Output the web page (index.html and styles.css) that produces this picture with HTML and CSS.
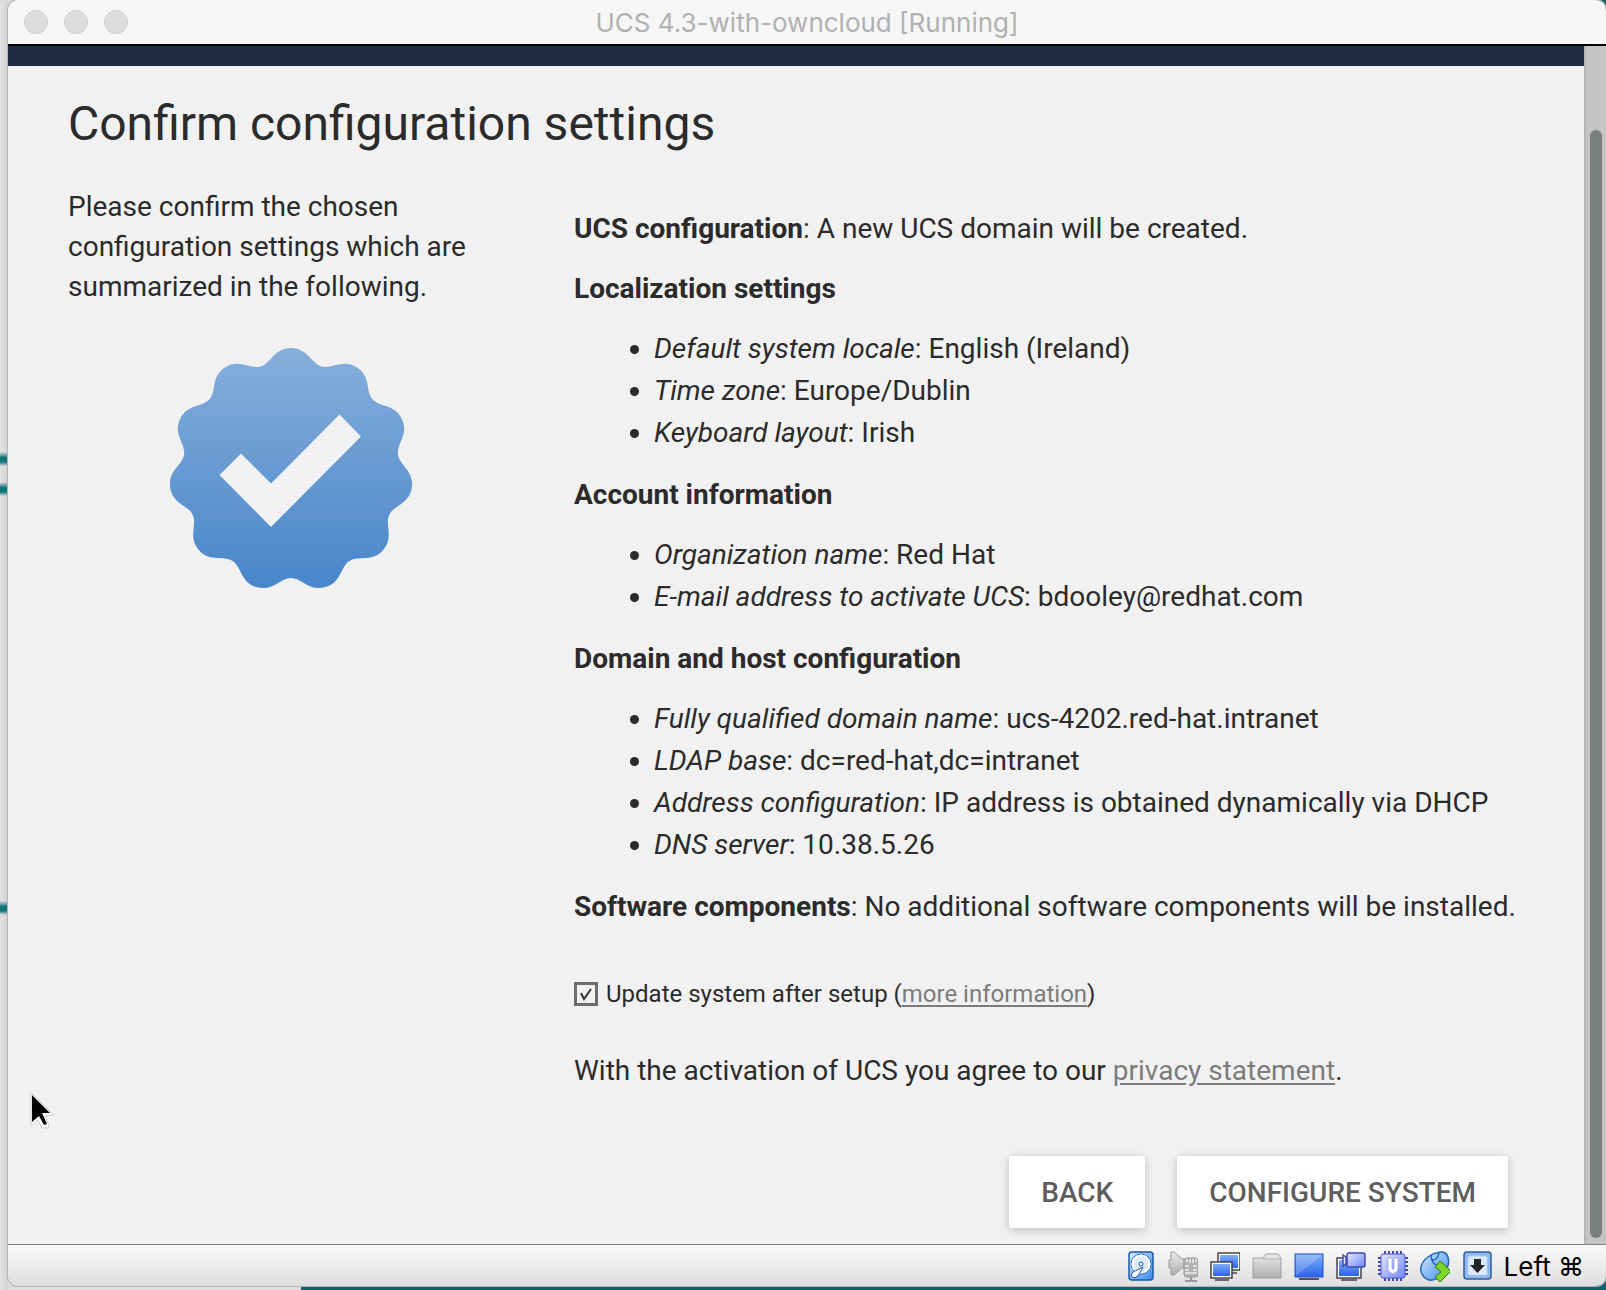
FILE: index.html
```html
<!DOCTYPE html>
<html lang="en">
<head>
<meta charset="utf-8">
<title>UCS 4.3-with-owncloud [Running]</title>
<link rel="stylesheet" href="styles.css">
</head>
<body>
<div class="window">
  <header class="titlebar">
    <div class="lights">
      <button class="light" type="button" aria-label="Close"></button>
      <button class="light" type="button" aria-label="Minimize"></button>
      <button class="light" type="button" aria-label="Zoom"></button>
    </div>
    <div class="window-title">UCS 4.3-with-owncloud [Running]</div>
  </header>

  <div class="screen">
    <main class="wizard">
      <div class="navbar"></div>
      <div class="page">
        <h1>Confirm configuration settings</h1>
        <div class="columns">
          <aside class="intro">
            <p>Please confirm the chosen configuration settings which are summarized in the following.</p>
            <svg class="badge" viewBox="-122 -122 244 242" aria-hidden="true">
              <defs>
                <linearGradient id="badge-fill" x1="0" y1="0" x2="0" y2="1">
                  <stop offset="0" stop-color="#86aeda"/>
                  <stop offset="1" stop-color="#4886ca"/>
                </linearGradient>
              </defs>
              <path fill="url(#badge-fill)" d="M0-122C17-122 20-106.600 30.400-103.600S51.700-111.800 66-102.600 74.400-79 81.600-70.700 103.900-66.200 111-50.700 105.300-26.300 106.900-15.400 123.200.6 120.800 17.400 102.800 34.900 98.200 44.900 103.300 67.100 92.200 79.900 67.700 85 58.400 90.900 50.700 112.300 34.400 117.100 11 108 0 108-18.100 121.900-34.400 117.100-49.100 96.800-58.400 90.900-81.100 92.700-92.200 79.900-93.600 54.900-98.200 44.900-118.400 34.200-120.800 17.400-108.500-4.500-106.900-15.400-118.100-35.200-111-50.700-88.800-62.400-81.600-70.700-80.300-93.400-66-102.600-41-100.500-30.400-103.600-17-122 0-122Z"/>
              <path fill="#f1f1f1" d="M-71.5 5-50-16.500-20 13.500 48.500-55.500 70-33.500-20 57Z"/>
            </svg>
          </aside>

          <section class="summary">
            <p><b>UCS configuration</b>: A new UCS domain will be created.</p>
            <p><b>Localization settings</b></p>
            <ul>
              <li><i>Default system locale</i>: English (Ireland)</li>
              <li><i>Time zone</i>: Europe/Dublin</li>
              <li><i>Keyboard layout</i>: Irish</li>
            </ul>
            <p><b>Account information</b></p>
            <ul>
              <li><i>Organization name</i>: Red Hat</li>
              <li><i>E-mail address to activate UCS</i>: bdooley@redhat.com</li>
            </ul>
            <p><b>Domain and host configuration</b></p>
            <ul>
              <li><i>Fully qualified domain name</i>: ucs-4202.red-hat.intranet</li>
              <li><i>LDAP base</i>: dc=red-hat,dc=intranet</li>
              <li><i>Address configuration</i>: IP address is obtained dynamically via DHCP</li>
              <li><i>DNS server</i>: 10.38.5.26</li>
            </ul>
            <p><b>Software components</b>: No additional software components will be installed.</p>
            <div class="update">
              <input type="checkbox" id="update" checked>
              <label for="update">Update system after setup (<a href="#more">more information</a>)</label>
            </div>
            <p>With the activation of UCS you agree to our <a href="#privacy">privacy statement</a>.</p>
          </section>
        </div>
        <div class="actions">
          <button class="btn" type="button">BACK</button>
          <button class="btn" type="button">CONFIGURE SYSTEM</button>
        </div>
      </div>
      <svg class="cursor" viewBox="0 0 26 40" aria-hidden="true">
        <path d="M1 1V35L8 29 12 37 18 37 19 34 15 25 24 24Z" fill="#fff" stroke="#ccc"/>
        <path d="M2 4V31L9 25 14 34 17 33 12 22 20 22Z" fill="#000"/>
      </svg>
    </main>
    <div class="scrollbar"><div class="thumb"></div></div>
  </div>

  <footer class="statusbar">
    <svg viewBox="0 0 30 32" aria-hidden="true">
      <defs>
        <linearGradient id="blue" x1="0" y1="0" x2="1" y2="1"><stop offset="0" stop-color="#d4ebff"/><stop offset="1" stop-color="#3a8aec"/></linearGradient>
        <linearGradient id="screen" x1="0" y1="0" x2="0" y2="1"><stop offset="0" stop-color="#7fb0fa"/><stop offset="1" stop-color="#2b62ea"/></linearGradient>
        <linearGradient id="grey" x1="0" y1="0" x2="0" y2="1"><stop offset="0" stop-color="#ececec"/><stop offset="1" stop-color="#aeaeae"/></linearGradient>
        <linearGradient id="violet" x1="0" y1="0" x2="1" y2="1"><stop offset="0" stop-color="#e4e8ff"/><stop offset="1" stop-color="#6f86f8"/></linearGradient>
      </defs>
      <rect x="3" y="2" width="24" height="28" rx="3" fill="url(#blue)" stroke="#1c57a8" stroke-width="1.500"/>
      <circle cx="15" cy="14" r="10" fill="#dcebfd" stroke="#2b6cc0"/>
      <circle cx="15" cy="14" r="8.500" fill="none" stroke="#fff" stroke-width="2"/>
      <circle cx="15" cy="14" r="2" fill="#fff" stroke="#1c57a8"/>
      <path d="M17 17 7 22Q4 25 6 27 9 29 12 26Z" fill="#fff" stroke="#1c57a8"/>
    </svg>
    <svg viewBox="0 0 30 32" aria-hidden="true">
      <path d="M1 10H3L3 2H6L14 9H16V18H14L6 25H3V18H1Z" fill="url(#grey)" stroke="#999"/>
      <rect x="16" y="8" width="14" height="19" rx="3" fill="#b2b2b2" stroke="#999"/>
      <path d="M19 12V9M22 13V9M25 13V9M28 12V9M17 16H21M25 16H29M17 20H21M25 20H29M17 23H29" stroke="#eee" stroke-width="1.500"/>
      <path d="M23 27V31M17 31H29" stroke="#999" stroke-width="2"/>
    </svg>
    <svg viewBox="0 0 30 32" aria-hidden="true">
      <path d="M8 3H30V20H8ZM22 23H27" fill="#fff" stroke="#444" stroke-width="1.500"/>
      <rect x="10" y="5" width="18" height="13" fill="url(#screen)"/>
      <path d="M1 12H22V28H1ZM5 30H19" fill="#fff" stroke="#444" stroke-width="1.500"/>
      <rect x="3" y="14" width="17" height="12" fill="url(#screen)"/>
    </svg>
    <svg viewBox="0 0 30 32" aria-hidden="true">
      <path d="M1 8H11L14 4H26L29 8V28H1Z" fill="url(#grey)" stroke="#a0a0a0"/>
      <path d="M11 9H29" stroke="#b4b4b4"/>
    </svg>
    <svg viewBox="0 0 30 32" aria-hidden="true">
      <rect x="1" y="4" width="28" height="23" fill="url(#screen)" stroke="#2450b8"/>
      <path d="M2 5H28L2 26Z" fill="#fff" opacity=".2"/>
      <path d="M5 29H25" stroke="#555" stroke-width="2"/>
    </svg>
    <svg viewBox="0 0 30 32" aria-hidden="true">
      <path d="M1 8H25V28H1ZM5 30H21" fill="#fff" stroke="#444" stroke-width="1.500"/>
      <rect x="3" y="10" width="20" height="16" fill="url(#screen)"/>
      <path d="M7 5 10 7V14L7 16Z" fill="#e4e8ff" stroke="#4048b8" stroke-width="1.500"/>
      <rect x="11" y="3" width="18" height="14" rx="2" fill="url(#violet)" stroke="#4048b8" stroke-width="1.500"/>
    </svg>
    <svg viewBox="0 0 30 32" aria-hidden="true">
      <path d="M7 1V31M11 1V31M15 1V31M19 1V31M23 1V31M0 8H30M0 12H30M0 16H30M0 20H30M0 24H30" stroke="#4448a8" stroke-width="2"/>
      <rect x="3" y="4" width="24" height="24" rx="2" fill="url(#violet)" stroke="#4a56c8"/>
      <path d="M10 8H14V19H16V8H20V19Q20 22 15 24 10 22 10 19Z" fill="#fff" stroke="#6a74c8" stroke-width=".500"/>
    </svg>
    <svg viewBox="0 0 30 32" aria-hidden="true">
      <path d="M4 27C-2 21 1 12 8 7S24 0 27 5 29 19 22 25 9 32 4 27Z" fill="url(#blue)" stroke="#2569b4" stroke-width="1.500"/>
      <path d="M11 5Q11 14 19 16M11 9Q17 12 19 3" fill="none" stroke="#2569b4" stroke-width="1.500"/>
      <path d="M15 17 20 11 31 21 20 32 15 27 21 22Z" fill="#7ad628" stroke="#2c7a0a"/>
    </svg>
    <svg viewBox="0 0 30 32" aria-hidden="true">
      <rect x="2" y="2" width="27" height="27" rx="3" fill="#8fb8ee" stroke="#2d5f9e" stroke-width="1.500"/>
      <rect x="6" y="6" width="19" height="19" rx="1" fill="#dce9f8" stroke="#b8d0ee"/>
      <path d="M12 9H19V15H23L15.500 23 8 15H12Z" fill="#222"/>
    </svg>
    <span class="hostkey">Left ⌘</span>
  </footer>
</div>
</body>
</html>
```
FILE: styles.css
```css
* { box-sizing: border-box; }

body {
  margin: 0;
  min-height: 100vh;
  display: flex;
  padding: 0 0 4px 8px;
  background:
    linear-gradient(transparent, #0f747a 40% 70%, transparent) 0 452px / 8px 14px no-repeat,
    linear-gradient(transparent, #0f747a 40% 70%, transparent) 0 482px / 8px 14px no-repeat,
    linear-gradient(transparent, #0f747a 40% 70%, transparent) 0 901px / 8px 14px no-repeat,
    linear-gradient(90deg, #e2e2e2, #d2d2d2) 0 0 / 8px 100% no-repeat,
    linear-gradient(90deg, #dedede 301px, #0d636b 301px);
  font-family: Roboto, "Liberation Sans", sans-serif;
  font-size: 28px;
  line-height: 32px;
  color: #2b2b2b;
}

p, ul, h1 { margin: 0; }
a { color: #7c7c7c; text-underline-offset: 3px; }

.window {
  flex: 1;
  display: flex;
  flex-direction: column;
  border-radius: 10px;
  overflow: hidden;
  box-shadow: 0 0 0 1px #b4b4b4;
}

.titlebar {
  display: grid;
  grid-template-columns: 1fr auto 1fr;
  align-items: center;
  height: 46px;
  padding: 0 16px;
  background: #f6f6f6;
  border-bottom: 2px solid #000;
}
.lights { display: flex; gap: 16px; }
.light {
  width: 24px;
  height: 24px;
  padding: 0;
  border: 1px solid #cdcdcd;
  border-radius: 50%;
  background: #dcdcdc;
}
.window-title {
  padding-top: 2px;
  font-family: Inter, "Liberation Sans", sans-serif;
  font-size: 26px;
  color: #b1b1b1;
}

.screen { flex: 1; display: flex; background: #f1f1f1; }
.wizard { flex: 1; position: relative; }
.navbar { height: 20px; background: #202c44; }
.page { padding: 28px 60px 16px; }

h1 { font-size: 48px; line-height: 60px; font-weight: 400; }

.columns {
  display: grid;
  grid-template-columns: 446px 1fr;
  gap: 60px;
  padding-top: 33px;
}
.intro p { line-height: 40px; width: 420px; }
.badge { display: block; width: 244px; height: 242px; margin: 41px auto 0; }

.summary { padding-top: 26px; }
.summary p { margin-bottom: 28px; }
.summary ul { padding-left: 80px; margin-bottom: 30px; display: grid; gap: 10px; }

.update {
  display: flex;
  align-items: center;
  gap: 8px;
  margin: 55px 0 45px;
  font-size: 24px;
}
.update input {
  appearance: none;
  width: 24px;
  height: 24px;
  margin: 0;
  border: 3px solid #6c6c6c;
  background: url("data:image/svg+xml,%3Csvg xmlns='http://www.w3.org/2000/svg' viewBox='0 0 18 18'%3E%3Cpath d='M4 8L7 14L14 4' fill='none' stroke='%23333' stroke-width='2'/%3E%3C/svg%3E") center / 18px no-repeat;
}

.actions { display: flex; justify-content: flex-end; gap: 32px; padding: 41px 16px 0 0; }
.btn {
  height: 72px;
  padding: 2px 32px 0;
  border: 0;
  border-radius: 3px;
  background: #fff;
  box-shadow: 0 2px 10px rgba(0, 0, 0, .22);
  font: 500 28px/32px Roboto, "Liberation Sans", sans-serif;
  color: #5e5e5e;
}

.cursor { position: absolute; left: 22px; top: 1045px; width: 26px; height: 40px; }

.scrollbar {
  width: 22px;
  padding: 84px 4px 6px;
  display: flex;
  background: #c3c5c4;
  border-left: 2px solid #b4b6b1;
}
.thumb { width: 12px; border-radius: 6px; background: #7a7e7e; }

.statusbar {
  display: flex;
  align-items: center;
  justify-content: flex-end;
  gap: 12px;
  height: 42px;
  padding-right: 22px;
  border-top: 1px solid #808080;
  background: linear-gradient(#f9f9f9, #dedede);
}
.statusbar svg { width: 30px; height: 32px; }
.hostkey { padding-top: 2px; font-family: Inter, "DejaVu Sans", sans-serif; font-size: 26px; color: #000; }
```
